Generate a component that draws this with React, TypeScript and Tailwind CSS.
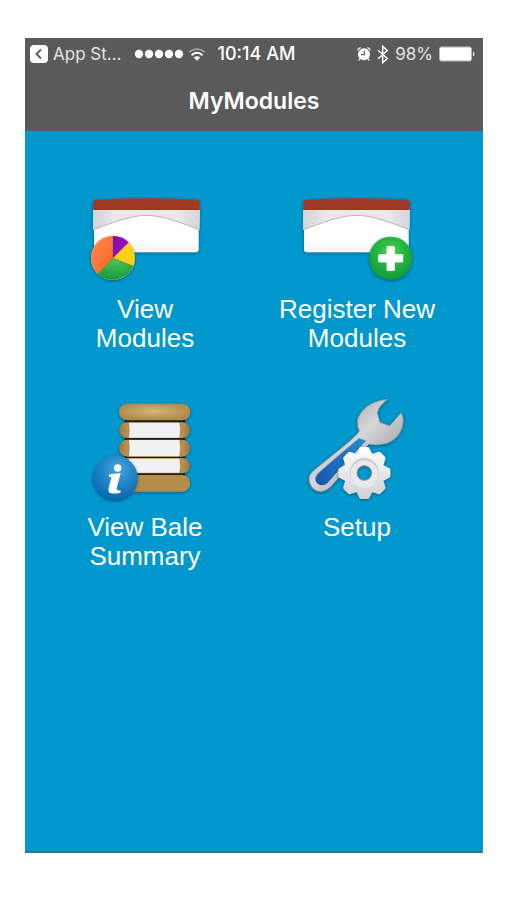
import type { ReactNode } from "react";

function BackIcon() {
  return (
    <svg viewBox="0 0 18 18" className="size-[18px]" aria-hidden="true">
      <rect width="18" height="18" rx="4" fill="#fff" />
      <path d="M11 4.5 6.5 9l4.5 4.5" fill="none" stroke="#5a5a5a" strokeWidth="1.8" />
    </svg>
  );
}

function SignalDots() {
  return (
    <svg viewBox="0 0 50 10" className="h-[10px] w-[50px]" fill="#fff" aria-hidden="true">
      {[5, 15, 25, 35, 45].map((cx) => (
        <circle key={cx} cx={cx} cy="5" r="4.2" />
      ))}
    </svg>
  );
}

function WifiIcon() {
  return (
    <svg viewBox="0 0 54 40" className="h-[13px] w-[18px]" fill="none" aria-hidden="true">
      <path d="M3 13Q27-7 51 13" stroke="#a6a6a6" strokeWidth="5" />
      <path d="M10 22Q27 7 44 22" stroke="#fff" strokeWidth="6" />
      <path d="m17 29q10-7 20 0l-10 10z" fill="#fff" />
    </svg>
  );
}

function AlarmIcon() {
  return (
    <svg viewBox="0 0 42 42" className="size-[14px]" fill="none" aria-hidden="true">
      <path d="M2 10q2-7 9-8M31 2q7 1 9 8M9 35l-4 5M33 35l4 5" stroke="#fff" strokeWidth="4" />
      <circle cx="21" cy="22" r="18" fill="#fff" />
      <path d="M22 11v12H12" stroke="#5a5a5a" strokeWidth="3.5" />
    </svg>
  );
}

function BluetoothIcon() {
  return (
    <svg viewBox="0 0 36 58" className="h-[19px] w-[12px]" fill="none" stroke="#fff" strokeWidth="4.5" aria-hidden="true">
      <path d="m3 16 28 25-14 13V4l14 13L3 42" />
    </svg>
  );
}

function BatteryIcon() {
  return (
    <svg viewBox="0 0 36 16" className="h-[16px] w-[36px]" aria-hidden="true">
      <rect x=".5" y="1" width="32" height="14" rx="2" fill="#fff" stroke="#b5b5b5" />
      <path d="M34 5.5q3 2.5 0 5z" fill="#fff" />
    </svg>
  );
}

function Shadow({ id }: { id: string }) {
  return (
    <filter id={id} x="-20%" y="-20%" width="140%" height="140%">
      <feDropShadow dx="0" dy="3" stdDeviation="4" floodColor="#022c45" floodOpacity=".6" />
    </filter>
  );
}

function ModuleBox({ id }: { id: string }) {
  return (
    <>
      <defs>
        <Shadow id={`${id}-shadow`} />
        <linearGradient id={`${id}-flap`} x1="0" x2="1">
          <stop offset="0" stopColor="#d2d3d5" />
          <stop offset=".2" stopColor="#e9e9eb" />
          <stop offset=".8" stopColor="#e9e9eb" />
          <stop offset="1" stopColor="#d4d5d8" />
        </linearGradient>
        <linearGradient id={`${id}-lid`} x2="0" y2="1">
          <stop offset="0" stopColor="#8a4a3d" />
          <stop offset=".25" stopColor="#a03a28" />
          <stop offset="1" stopColor="#9f3624" />
        </linearGradient>
        <linearGradient id={`${id}-front`} x2="0" y2="1">
          <stop offset=".7" stopColor="#fff" />
          <stop offset="1" stopColor="#f4f4f6" />
        </linearGradient>
      </defs>
      <g filter={`url(#${id}-shadow)`}>
        <path d="M40 74h319l-1 60-2 1v58q0 9-9 9H51q-9 0-9-9v-58l-2-1z" fill={`url(#${id}-front)`} />
        <path d="M40 74h319l-1 60C310 116 250 91 200 91S90 116 41 134z" fill={`url(#${id}-flap)`} />
        <path d="M41 134C90 116 150 91 200 91s110 25 158 43" fill="none" stroke="#a8a8ab" strokeWidth="2.5" />
        <path d="M40 49q0-5 6-5 154-10 307 0 6 0 6 5v26H40z" fill={`url(#${id}-lid)`} />
      </g>
    </>
  );
}

function ViewModulesIcon() {
  return (
    <svg viewBox="-9 -30 408 360" className="h-[120px] w-[136px]" aria-hidden="true">
      <ModuleBox id="view" />
      <defs>
        <linearGradient id="pie-orange" x2="1" y2="1">
          <stop offset="0" stopColor="#ff8a52" />
          <stop offset="1" stopColor="#f96420" />
        </linearGradient>
        <radialGradient id="pie-green" cx=".5" cy=".2" r=".8">
          <stop offset="0" stopColor="#4cc056" />
          <stop offset="1" stopColor="#149a40" />
        </radialGradient>
        <linearGradient id="pie-purple" x2="1" y2="1">
          <stop offset="0" stopColor="#7d10a6" />
          <stop offset="1" stopColor="#aa0bdc" />
        </linearGradient>
      </defs>
      <g filter="url(#view-shadow)">
        <circle cx="99" cy="219" r="66" fill="#ffd016" />
        <path d="M99 219 54 267A66 66 0 0 1 99 153z" fill="url(#pie-orange)" />
        <path d="M99 219v-66a66 66 0 0 1 47 19z" fill="url(#pie-purple)" />
        <path d="m99 219 61 24A66 66 0 0 1 54 267z" fill="url(#pie-green)" />
      </g>
      <path d="M99 154v65l46-46M99 219l60 24M99 219l-44 47" fill="none" stroke="#6b4715" strokeOpacity=".35" strokeWidth="2" />
    </svg>
  );
}

function RegisterModulesIcon() {
  return (
    <svg viewBox="-3 -30 408 360" className="h-[120px] w-[136px]" aria-hidden="true">
      <ModuleBox id="register" />
      <defs>
        <radialGradient id="add-green" cx=".5" cy=".35" r=".65">
          <stop offset="0" stopColor="#4fd052" />
          <stop offset=".55" stopColor="#23b33a" />
          <stop offset="1" stopColor="#109840" />
        </radialGradient>
      </defs>
      <circle cx="302" cy="220" r="65" fill="url(#add-green)" filter="url(#register-shadow)" />
      <path d="M302 195v51M277 220h51" fill="none" stroke="#fff" strokeWidth="23" strokeLinecap="square" />
      <rect x="290" y="183" width="24" height="75" rx="7" fill="#fff" />
      <rect x="265" y="208" width="74" height="24" rx="7" fill="#fff" />
    </svg>
  );
}

function BaleSummaryIcon() {
  return (
    <svg viewBox="-9 9 408 360" className="h-[120px] w-[136px]" aria-hidden="true">
      <defs>
        <Shadow id="bale-shadow" />
        <radialGradient id="bale-top" cx=".5" cy=".45" r=".55">
          <stop offset="0" stopColor="#d6b878" />
          <stop offset="1" stopColor="#ae8849" />
        </radialGradient>
        <linearGradient id="bale-side">
          <stop offset="0" stopColor="#a17b3c" />
          <stop offset=".1" stopColor="#b88f50" />
          <stop offset=".9" stopColor="#b88f50" />
          <stop offset="1" stopColor="#99743b" />
        </linearGradient>
        <radialGradient id="info-blue" cx=".55" cy=".3" r=".7">
          <stop offset="0" stopColor="#46a5e0" />
          <stop offset=".6" stopColor="#1c80c4" />
          <stop offset="1" stopColor="#0768aa" />
        </radialGradient>
      </defs>
      <g filter="url(#bale-shadow)">
        <path d="M134 86h181v174H134z" fill="#1d1d1d" />
        <rect x="118" y="97" width="212" height="47" rx="23" fill="url(#bale-side)" />
        <rect x="118" y="149" width="212" height="51" rx="24" fill="url(#bale-side)" />
        <rect x="118" y="204" width="212" height="46" rx="23" fill="url(#bale-side)" />
        <rect x="118" y="255" width="212" height="50" rx="24" fill="#b48d49" />
        <rect x="117" y="41" width="214" height="50" rx="25" fill="url(#bale-top)" />
        <path d="M147 98h151q5 23 0 45H147q4-23 0-45zM147 150h151q5 25 0 49H147q4-25 0-49zM147 206h151q5 21 0 42H147z" fill="#f1f1f4" />
      </g>
      <circle cx="106" cy="264" r="67" fill="url(#info-blue)" filter="url(#bale-shadow)" />
      <circle cx="113" cy="234" r="11" fill="#fff" />
      <path d="M88 253q17-1 34-4l-12 46q-2 7 12 6l-1 7q-36 8-36-8 0-5 9-35 1-5-7-5z" fill="#fff" />
    </svg>
  );
}

function SetupIcon() {
  const teeth = [0, 45, 90, 135, 180, 225, 270, 315];
  return (
    <svg viewBox="-3 9 408 360" className="h-[120px] w-[136px]" aria-hidden="true">
      <defs>
        <Shadow id="setup-shadow" />
        <linearGradient id="wrench-metal" x1=".4" y1="0" x2="1" y2=".6">
          <stop offset="0" stopColor="#a2a4a8" />
          <stop offset=".45" stopColor="#d6d7da" />
          <stop offset="1" stopColor="#9da0a5" />
        </linearGradient>
        <linearGradient id="wrench-grip" x1="1" x2="0" y2="1">
          <stop offset="0" stopColor="#238bd2" />
          <stop offset="1" stopColor="#1856ac" />
        </linearGradient>
        <linearGradient id="gear-metal" x2="0" y2="1">
          <stop offset="0" stopColor="#fff" />
          <stop offset="1" stopColor="#cfd0d4" />
        </linearGradient>
        <mask id="gear-shape" maskUnits="userSpaceOnUse" x="130" y="160" width="190" height="180">
          <g fill="#fff">
            {teeth.map((angle) => (
              <path
                key={angle}
                d="m195 200 12-23q1-6 7-6h18q6 0 7 6l12 23z"
                transform={`rotate(${angle} 223 249)`}
              />
            ))}
            <circle cx="223" cy="249" r="61" />
          </g>
          <circle cx="223" cy="249" r="22" fill="#000" />
        </mask>
      </defs>
      <g filter="url(#setup-shadow)">
        <path
          d="M293 28C248 30 205 60 202 96q0 15 6 27-9 14-38 38L69 243q-17 16-10 36 9 25 33 26 16 0 32-17L236 163q27 5 56-3 44-19 48-65 0-17-7-27l-34 39-29-10-8-29q6-21 31-40z"
          fill="url(#wrench-metal)"
          stroke="#82878d"
          strokeWidth="2"
        />
        <path d="m207 145 21 7-76 83-40 45q-11 9-24 4-13-6-12-19 1-9 11-18l66-57z" fill="url(#wrench-grip)" />
        <path d="m207 145-54 45-66 57q-10 9-11 18" fill="none" stroke="#8fa3b5" strokeWidth="3" />
      </g>
      <g filter="url(#setup-shadow)">
        <g mask="url(#gear-shape)">
          <rect x="143" y="169" width="160" height="160" fill="url(#gear-metal)" />
          <circle cx="223" cy="247" r="43" fill="#c9cbcf" />
          <circle cx="223" cy="252" r="41" fill="#e9e9ec" />
        </g>
      </g>
      <circle cx="223" cy="249" r="22" fill="none" stroke="#8d9297" strokeWidth="3" />
    </svg>
  );
}

function Tile({ icon, children }: { icon: ReactNode; children: ReactNode }) {
  return (
    <button type="button" className="flex min-w-0 flex-col items-center text-center text-[26px] leading-[29px] text-white">
      {icon}
      <span>{children}</span>
    </button>
  );
}

export default function App() {
  return (
    <div className="min-h-screen bg-white px-6 pt-[38px] pb-[47px] font-['Liberation_Sans',Arial,sans-serif]">
      <div className="ml-px flex min-h-[815px] flex-col border-b-2 border-[#367393] bg-[#0098cd]">
        <header className="bg-[#5a5a5a] font-[Inter,sans-serif] text-white">
          <div className="flex h-8 items-center pr-2 pl-[5px] text-[17px] leading-5 whitespace-nowrap">
            <button type="button" className="flex items-center gap-[5px] text-[#e4e4e4]">
              <BackIcon />
              <span>App St...</span>
            </button>
            <div className="ml-3 flex items-center gap-1">
              <SignalDots />
              <WifiIcon />
            </div>
            <time className="ml-3 text-[18px] font-medium">10:14 AM</time>
            <div className="ml-auto flex items-center gap-[6px]">
              <AlarmIcon />
              <BluetoothIcon />
              <span className="text-[#e4e4e4]">98%</span>
              <BatteryIcon />
            </div>
          </div>
          <h1 className="flex h-[61px] items-center justify-center text-[23px] leading-7 font-semibold">MyModules</h1>
        </header>
        <main className="grid grid-cols-2 items-start gap-y-10 pt-11 pr-5 pl-[14px]">
          <Tile icon={<ViewModulesIcon />}>
            View
            <br />
            Modules
          </Tile>
          <Tile icon={<RegisterModulesIcon />}>
            Register New
            <br />
            Modules
          </Tile>
          <Tile icon={<BaleSummaryIcon />}>
            View Bale
            <br />
            Summary
          </Tile>
          <Tile icon={<SetupIcon />}>Setup</Tile>
        </main>
      </div>
    </div>
  );
}
